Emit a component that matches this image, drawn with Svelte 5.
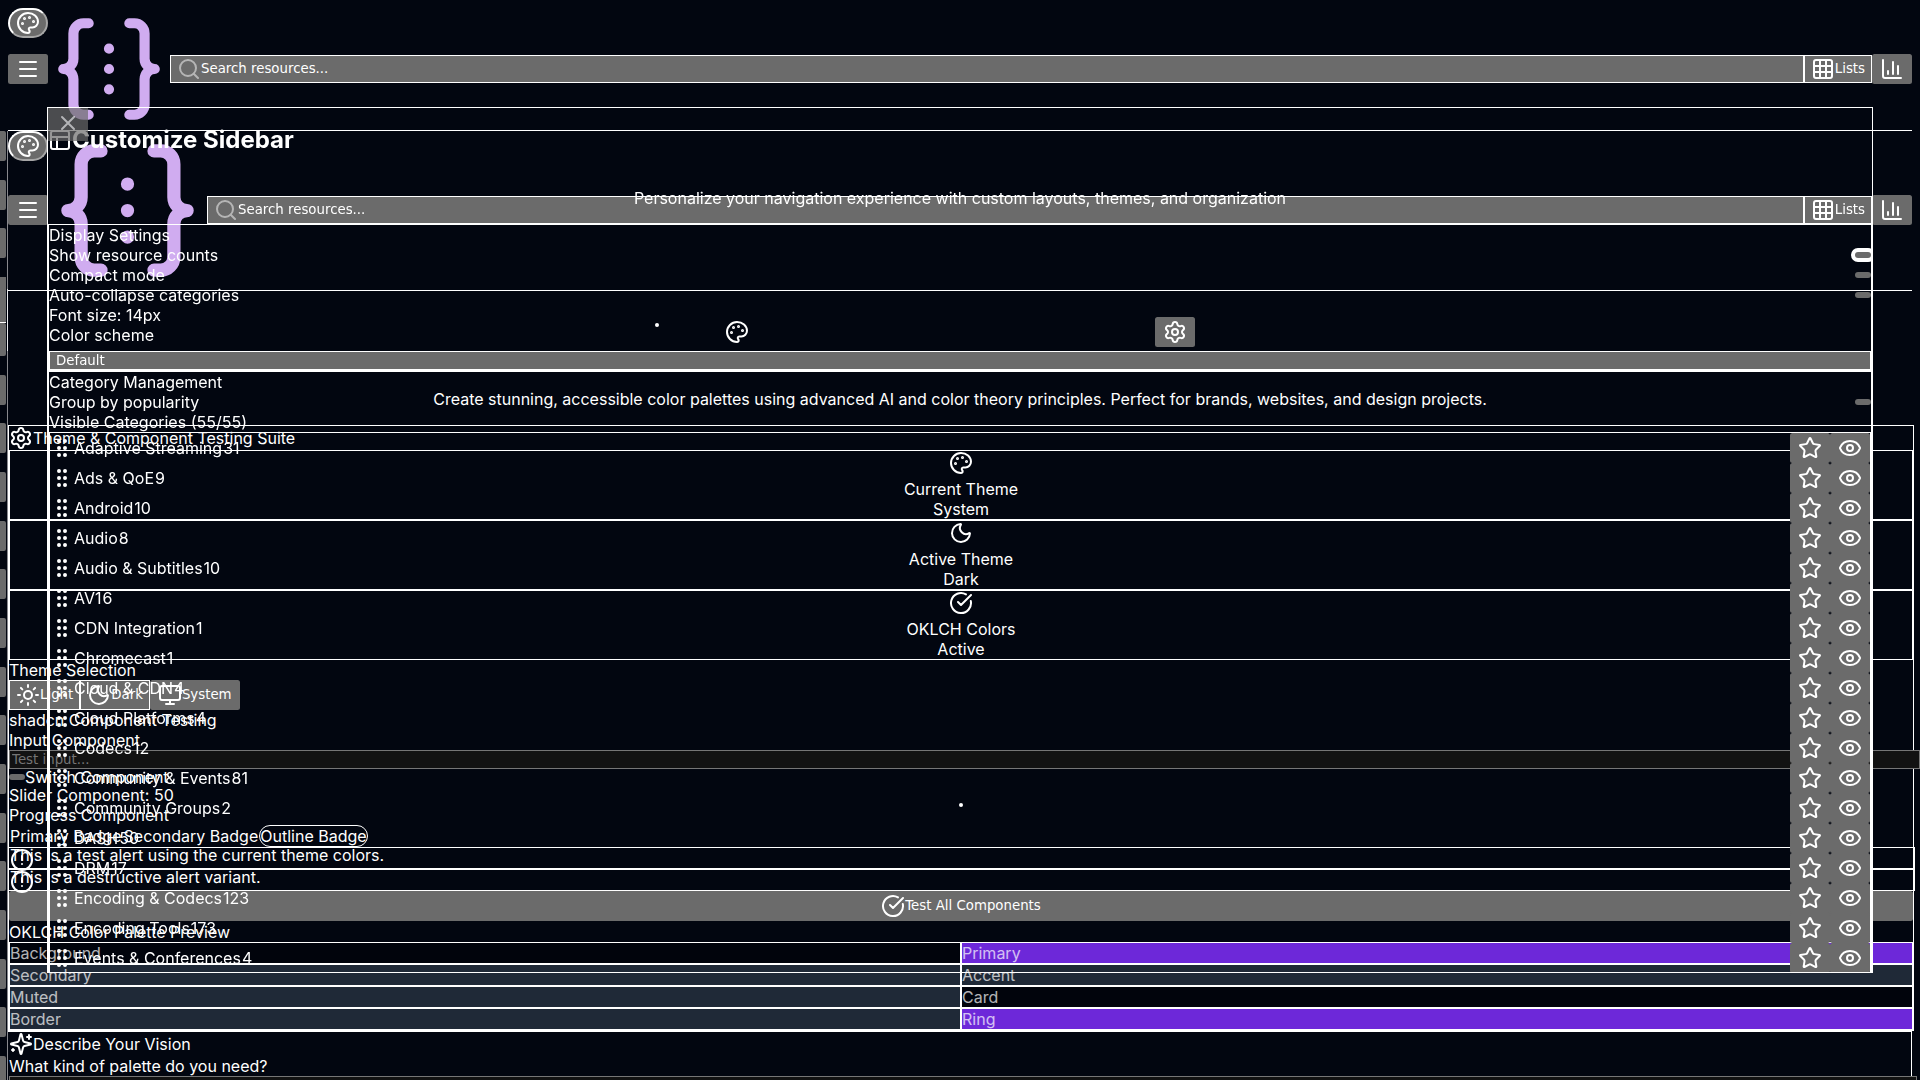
<script lang="ts">
  const categories: [string, number][] = [
    ['Adaptive Streaming', 31], ['Ads & QoE', 9], ['Android', 10], ['Audio', 8],
    ['Audio & Subtitles', 10], ['AV1', 6], ['CDN Integration', 1], ['Chromecast', 1],
    ['Cloud & CDN', 4], ['Cloud Platforms', 4], ['Codecs', 12], ['Community & Events', 81],
    ['Community Groups', 2], ['DASH', 50], ['DRM', 17], ['Encoding & Codecs', 123],
    ['Encoding Tools', 173], ['Events & Conferences', 4],
  ];
  const swatches: [string, string][] = [
    ['Background', 'base'], ['Primary', 'violet'], ['Secondary', 'slate'], ['Accent', 'slate'],
    ['Muted', 'slate'], ['Card', 'base'], ['Border', 'slate'], ['Ring', 'violet'],
  ];
  const stats = [
    { icon: 'palette', label: 'Current Theme', value: 'System' },
    { icon: 'moon', label: 'Active Theme', value: 'Dark' },
    { icon: 'check', label: 'OKLCH Colors', value: 'Active' },
  ];
  const railTop = [0, 1, 2];
  const railRest = Array.from({ length: 15 }, (_, i) => i);
</script>

{#snippet icon(name: string)}
  <svg class="icon" viewBox="0 0 24 24">
    {#if name === 'palette'}
      <circle cx="13.5" cy="6.5" r=".5" fill="currentColor" /><circle cx="17.5" cy="10.5" r=".5" fill="currentColor" />
      <circle cx="8.5" cy="7.5" r=".5" fill="currentColor" /><circle cx="6.5" cy="12.5" r=".5" fill="currentColor" />
      <path d="M12 2C6.5 2 2 6.5 2 12s4.500 10 10 10c.926 0 1.648-.746 1.648-1.688 0-.437-.18-.835-.437-1.125-.29-.289-.438-.652-.438-1.125a1.640 1.640 0 0 1 1.668-1.668h1.996c3.051 0 5.555-2.503 5.555-5.554C21.965 6.012 17.461 2 12 2z" />
    {:else if name === 'menu'}
      <path d="M4 5h16M4 12h16M4 19h16" />
    {:else if name === 'search'}
      <circle cx="11" cy="11" r="8" /><path d="m21 21-4.300-4.300" />
    {:else if name === 'grid'}
      <rect x="3" y="3" width="18" height="18" rx="2" /><path d="M3 9h18M3 15h18M9 3v18M15 3v18" />
    {:else if name === 'chart'}
      <path d="M3 3v16a2 2 0 0 0 2 2h16M18 17V9M13 17V5M8 17v-3" />
    {:else if name === 'gear'}
      <path d="M9.671 4.136a2.340 2.340 0 0 1 4.659 0 2.340 2.340 0 0 0 3.319 1.915 2.340 2.340 0 0 1 2.330 4.033 2.340 2.340 0 0 0 0 3.831 2.340 2.340 0 0 1-2.330 4.033 2.340 2.340 0 0 0-3.319 1.915 2.340 2.340 0 0 1-4.659 0 2.340 2.340 0 0 0-3.320-1.915 2.340 2.340 0 0 1-2.330-4.033 2.340 2.340 0 0 0 0-3.831A2.340 2.340 0 0 1 6.350 6.051a2.340 2.340 0 0 0 3.319-1.915" /><circle cx="12" cy="12" r="3" />
    {:else if name === 'moon'}
      <path d="M20.985 12.486a9 9 0 1 1-9.473-9.472c.405-.022.617.46.402.803a6 6 0 0 0 8.268 8.268c.344-.215.825-.004.803.401" />
    {:else if name === 'check'}
      <path d="M21.801 10A10 10 0 1 1 17 3.335M9 11l3 3L22 4" />
    {:else if name === 'sun'}
      <circle cx="12" cy="12" r="4" /><path d="M12 2v2M12 20v2M4.930 4.930l1.410 1.410M17.660 17.660l1.410 1.410M2 12h2M20 12h2M6.340 17.660l-1.410 1.410M19.070 4.930l-1.410 1.410" />
    {:else if name === 'monitor'}
      <rect x="2" y="3" width="20" height="14" rx="2" /><path d="M8 21h8M12 17v4" />
    {:else if name === 'alert'}
      <circle cx="12" cy="12" r="10" /><path d="M12 8v4M12 16h.01" />
    {:else if name === 'sparkles'}
      <path d="M9.937 15.500A2 2 0 0 0 8.500 14.063l-6.135-1.582a.5.5 0 0 1 0-.962L8.500 9.936A2 2 0 0 0 9.937 8.500l1.582-6.135a.5.5 0 0 1 .963 0L14.063 8.500A2 2 0 0 0 15.500 9.937l6.135 1.581a.5.5 0 0 1 0 .964L15.500 14.063a2 2 0 0 0-1.437 1.437l-1.582 6.135a.5.5 0 0 1-.963 0zM20 3v4M22 5h-4M4 17v2M5 18H3" />
    {:else if name === 'panels'}
      <rect x="3" y="3" width="18" height="18" rx="2" /><path d="M3 9h18M9 21V9" />
    {:else if name === 'x'}
      <path d="M18 6 6 18M6 6l12 12" />
    {:else if name === 'grip'}
      <circle cx="9" cy="12" r="1" /><circle cx="9" cy="5" r="1" /><circle cx="9" cy="19" r="1" />
      <circle cx="15" cy="12" r="1" /><circle cx="15" cy="5" r="1" /><circle cx="15" cy="19" r="1" />
    {:else if name === 'star'}
      <path d="M11.525 2.295a.53.53 0 0 1 .95 0l2.310 4.679a2.123 2.123 0 0 0 1.595 1.160l5.166.756a.53.53 0 0 1 .294.904l-3.736 3.638a2.123 2.123 0 0 0-.611 1.878l.882 5.140a.53.53 0 0 1-.771.560l-4.618-2.428a2.122 2.122 0 0 0-1.973 0L6.396 21.010a.53.53 0 0 1-.770-.560l.881-5.139a2.122 2.122 0 0 0-.611-1.879L2.160 9.795a.53.53 0 0 1 .294-.906l5.165-.755a2.122 2.122 0 0 0 1.597-1.160z" />
    {:else if name === 'eye'}
      <path d="M2.062 12.348a1 1 0 0 1 0-.696 10.750 10.750 0 0 1 19.876 0 1 1 0 0 1 0 .696 10.750 10.750 0 0 1-19.876 0" /><circle cx="12" cy="12" r="3" />
    {/if}
  </svg>
{/snippet}

{#snippet topbar(size: string)}
  <header class="topbar {size}">
    <button class="btn round">{@render icon('palette')}</button>
    <button class="btn">{@render icon('menu')}</button>
    <svg class="logo" viewBox="0 0 24 24">
      <path d="M8 3H7a2 2 0 0 0-2 2v5a2 2 0 0 1-2 2 2 2 0 0 1 2 2v5a2 2 0 0 0 2 2h1" />
      <path d="M16 21h1a2 2 0 0 0 2-2v-5a2 2 0 0 1 2-2 2 2 0 0 1-2-2V5a2 2 0 0 0-2-2h-1" />
      <path d="M12 8h.001M12 12h.001M12 16h.001" />
    </svg>
    <button class="outlined search"><span class="faint">{@render icon('search')}</span>Search resources...</button>
    <button class="outlined">{@render icon('grid')}Lists</button>
    <button class="btn">{@render icon('chart')}</button>
  </header>
{/snippet}

<div class="page">
  {@render topbar('small')}
  <div class="section">{@render topbar('large')}</div>

  <section class="hero">
    <div class="hero-row">
      <i class="dot"></i>
      {@render icon('palette')}
      <button class="btn">{@render icon('gear')}</button>
    </div>
    <p>Create stunning, accessible color palettes using advanced AI and color theory principles. Perfect for brands, websites, and design projects.</p>
  </section>

  <section class="suite">
    <div class="heading">{@render icon('gear')}<span>Theme &amp; Component Testing Suite</span></div>
    {#each stats as s}
      <div class="stat">{@render icon(s.icon)}<div>{s.label}</div><div>{s.value}</div></div>
    {/each}
    <div class="line">Theme Selection</div>
    <div class="themes">
      <button class="outlined">{@render icon('sun')}Light</button>
      <button class="outlined">{@render icon('moon')}Dark</button>
      <button class="btn">{@render icon('monitor')}System</button>
    </div>
    <div class="line">shadcn Component Testing</div>
    <div class="line">Input Component</div>
    <input class="field" placeholder="Test input..." />
    <div class="switch-row"><i class="switch"></i>Switch Component</div>
    <div class="line">Slider Component: 50</div>
    <div class="line progress">Progress Component<i class="dot"></i></div>
    <div class="badges"><span>Primary Badge</span><span>Secondary Badge</span><span class="ring">Outline Badge</span></div>
    <div class="alert">{@render icon('alert')}<span>This is a test alert using the current theme colors.</span></div>
    <div class="alert">{@render icon('alert')}<span>This is a destructive alert variant.</span></div>
    <button class="btn wide">{@render icon('check')}Test All Components</button>
    <div class="line preview">OKLCH Color Palette Preview</div>
    <div class="swatches">
      {#each swatches as [name, tone]}
        <div class="swatch {tone}"><span>{name}</span></div>
      {/each}
    </div>
  </section>

  <section class="vision">
    <div class="heading">{@render icon('sparkles')}<span>Describe Your Vision</span></div>
    <div class="line">What kind of palette do you need?</div>
    <div class="area"></div>
  </section>

  <aside class="rail">
    {#each railTop as _}<i class="tab"></i>{/each}
    <i class="tab tall"></i>
    <i class="tab joined"></i>
    {#each railRest as _}<i class="tab"></i>{/each}
  </aside>

  <div class="modal">
    <h2>{@render icon('panels')}Customize Sidebar</h2>
    <p class="intro">Personalize your navigation experience with custom layouts, themes, and organization</p>
    <div class="panel">
      <div class="row">Display Settings</div>
      <div class="row">Show resource counts<i class="switch focused"></i></div>
      <div class="row">Compact mode<i class="switch"></i></div>
      <div class="row">Auto-collapse categories<i class="switch"></i></div>
      <div class="row">Font size: 14px</div>
      <div class="row">Color scheme</div>
      <div class="select">Default</div>
    </div>
    <div class="panel rest">
      <div class="row">Category Management</div>
      <div class="row">Group by popularity<i class="switch"></i></div>
      <div class="row">Visible Categories (55/55)</div>
      <div class="list">
        {#each categories as [name, count]}
          <div class="item">
            {@render icon('grip')}
            <span>{name}</span><span class="count">{count}</span>
            <span class="actions">
              <button class="btn">{@render icon('star')}</button>
              <button class="btn">{@render icon('eye')}</button>
            </span>
          </div>
        {/each}
      </div>
    </div>
    <button class="close">{@render icon('x')}</button>
  </div>
</div>

<style>
  :global(body) { background: #020610; overflow: hidden; }
  .page, .page * { box-sizing: border-box; }
  .page {
    position: relative; width: 1920px; height: 1080px; overflow: hidden;
    padding: 8px 6px 0 8px; background: #020610; color: #fff;
    font: 16px/20px Inter, sans-serif;
  }
  p, h2 { margin: 0; }
  i { display: block; }
  .icon {
    display: block; flex: none; width: 24px; height: 24px; fill: none;
    stroke: currentColor; stroke-width: 2; stroke-linecap: round; stroke-linejoin: round;
  }
  button {
    display: flex; align-items: center; flex: none; margin: 0; color: #fff;
    background: #6b6b6b; font: 13.333px/16px "DejaVu Sans", sans-serif; white-space: nowrap;
  }
  .btn { height: 30px; padding: 3px 8px; border: 0; border-radius: 2.5px; }
  .outlined { height: 28px; padding: 0 6px; border: 1px solid #fff; border-radius: 0; }
  .search { flex: 1; }
  .faint { opacity: .5; }

  .topbar { position: relative; display: flex; align-items: center; width: 1904px; }
  .small { height: 122px; }
  .large { height: 159px; }
  .large button { margin-bottom: 1px; }
  .logo { flex: none; fill: none; stroke: #d0acf0; stroke-width: 2; stroke-linecap: round; stroke-linejoin: round; }
  .small .logo { width: 122px; height: 122px; }
  .large .logo { width: 159px; height: 159px; }
  .round {
    position: absolute; left: 0; top: 0; padding: 1px 6px; border: 2px solid;
    border-color: #fff #a6a6a6 #a6a6a6 #fff; border-radius: 15px;
  }
  .section { width: 1904px; height: 160px; border-top: 1px solid #fff; will-change: transform; }

  .hero { width: 1904px; height: 135px; padding-top: 26px; border-top: 1px solid #fff; text-align: center; }
  .hero-row { display: grid; grid-template-columns: 70px 430px 40px; align-items: center; height: 30px; padding-left: 647px; }
  .dot { width: 4px; height: 4px; border-radius: 2px; background: #fff; }
  .hero .dot { margin-bottom: 14px; }
  .hero p { padding-top: 42px; }

  .suite { width: 1906px; height: 606px; border: 1px solid #fff; }
  .heading { display: flex; height: 24px; align-items: center; }
  .stat {
    display: flex; flex-direction: column; align-items: center; width: 1904px; height: 70px;
    border: 1px solid #fff; text-align: center;
  }
  .stat .icon { margin-bottom: 4px; }
  .line { height: 20px; }
  .themes { display: flex; height: 30px; }
  .themes .outlined { height: 30px; }
  .field {
    display: block; width: 1911px; height: 19px; padding: 1px 2px; border: 1px solid #767676;
    background: #121212; color: #fff; font: 13.333px "DejaVu Sans", sans-serif; outline: 0;
  }
  .field::placeholder { color: #757575; opacity: 1; }
  .switch-row { display: flex; align-items: center; height: 16px; }
  .switch { width: 16px; height: 6px; border-radius: 3px; background: #6b6b6b; }
  .progress { position: relative; }
  .progress .dot { position: absolute; left: 950px; top: -2px; }
  .badges { display: flex; height: 22px; }
  .badges span { height: 22px; border: 1px solid transparent; border-radius: 11px; }
  .badges .ring { border-color: #fff; }
  .alert { position: relative; width: 1907px; height: 22px; margin-left: -1px; border: 1px solid #fff; }
  .alert .icon { position: absolute; left: 1px; top: 0; }
  .alert span { display: block; margin-top: -3px; padding-left: 1px; }
  .wide { justify-content: center; width: 1904px; height: 30px; }
  .preview { height: 21px; padding-top: 1px; }
  .swatches { display: grid; grid-template-columns: 952px 952px; }
  .swatch { height: 22px; border: 1px solid #fff; }
  .swatch span { opacity: .7; }
  .base { background: #01040c; }
  .violet { background: #6d28d9; }
  .slate { background: #1f2937; }

  .vision { width: 1904px; height: 120px; padding-left: 1px; border: 1px solid #fff; border-left: 0; }
  .vision .area { width: 1908px; height: 40px; border: 1px solid #767676; background: #121212; }

  .rail {
    position: absolute; left: 0; top: 131px; display: flex; flex-direction: column;
    gap: 18.67px; width: 8px; height: 960px; border-right: 1px solid;
    border-image: linear-gradient(#88888d 159px, #e8e8ea 159px, #e8e8ea 221px, #88888d 221px) 1;
  }
  .tab { flex: none; width: 6px; height: 30px; border-radius: 0 2px 2px 0; background: #6b6b6b; }
  .tall { height: 46px; border-bottom: 1px solid #fff; border-radius: 0; }
  .joined { height: 33px; margin-top: -18.67px; }

  .modal {
    position: absolute; left: 47px; top: 107px; width: 1826px; height: 866px; overflow: hidden;
    border: 1px solid #fff; will-change: transform;
  }
  h2 { display: flex; align-items: center; height: 24px; margin-top: 20px; font-size: 24px; font-weight: 700; line-height: 24px; }
  .intro { margin-top: 36px; height: 36px; text-align: center; }
  .panel { border: 1px solid #fff; }
  .panel:not(.rest) { height: 147px; }
  .row { display: flex; align-items: center; justify-content: space-between; height: 20px; }
  .focused { box-shadow: 0 0 0 4px #fff; }
  .select {
    height: 19px; margin-top: 6px; padding-left: 6px; border: 1px solid #fff;
    background: #6b6b6b; font: 13.333px/17px "DejaVu Sans", sans-serif;
  }
  .list { border: 1px solid #fff; }
  .item { display: flex; align-items: center; height: 30px; }
  .count { margin-left: 1px; }
  .actions { display: flex; margin-left: auto; }
  .close {
    position: absolute; left: 0; top: 0; align-items: flex-start; width: 40px; height: 33px;
    padding: 3px 8px; border: 0; opacity: .7;
  }
</style>
